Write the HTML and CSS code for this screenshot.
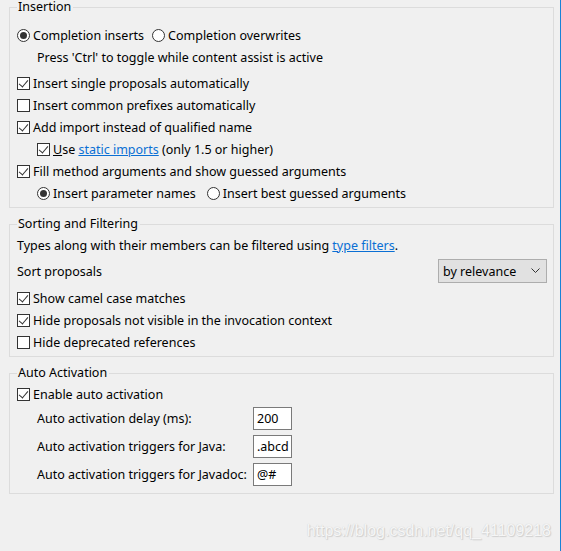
FILE: index.html
```html
<!DOCTYPE html>
<html lang="en">
<head>
    <meta charset="UTF-8">
    <title>Content Assist</title>
    <link rel="stylesheet" href="styles.css">
</head>
<body>
    <div class="page">
        <!-- Insertion -->
        <fieldset class="group group-insertion">
            <legend>Insertion</legend>
            <div class="row">
                <span class="opt"><span class="radio on"></span>Completion inserts</span>
                <span class="opt opt-gap"><span class="radio"></span>Completion overwrites</span>
            </div>
            <div class="row indent-text">Press 'Ctrl' to toggle while content assist is active</div>
            <div class="row row-sep"><span class="check on"></span>Insert single proposals automatically</div>
            <div class="row"><span class="check"></span>Insert common prefixes automatically</div>
            <div class="row"><span class="check on"></span>Add import instead of qualified name</div>
            <div class="row indent"><span class="check on"></span><u>U</u>se&nbsp;<a href="#">static imports</a>&nbsp;(only 1.5 or higher)</div>
            <div class="row"><span class="check on"></span>Fill method arguments and show guessed arguments</div>
            <div class="row indent">
                <span class="opt"><span class="radio on"></span>Insert parameter names</span>
                <span class="opt opt-gap2"><span class="radio"></span>Insert best guessed arguments</span>
            </div>
        </fieldset>

        <!-- Sorting and Filtering -->
        <fieldset class="group group-sorting">
            <legend>Sorting and Filtering</legend>
            <div class="row plain">Types along with their members can be filtered using&nbsp;<a href="#">type filters</a>.</div>
            <div class="row row-sort">
                <span class="plain">Sort proposals</span>
                <span class="combo">by relevance
                    <svg class="chev" width="9" height="6" viewBox="0 0 9 6"><polyline points="0.5,0.5 4.5,4.5 8.5,0.5" fill="none" stroke="#333" stroke-width="1"/></svg>
                </span>
            </div>
            <div class="row"><span class="check on"></span>Show camel case matches</div>
            <div class="row"><span class="check on"></span>Hide proposals not visible in the invocation context</div>
            <div class="row"><span class="check"></span>Hide deprecated references</div>
        </fieldset>

        <!-- Auto Activation -->
        <fieldset class="group group-auto">
            <legend>Auto Activation</legend>
            <div class="row"><span class="check on"></span>Enable auto activation</div>
            <div class="field-grid">
                <span class="field-label">Auto activation delay (ms):</span>
                <span class="field">200</span>
                <span class="field-label">Auto activation triggers for Java:</span>
                <span class="field">.abcd</span>
                <span class="field-label">Auto activation triggers for Javadoc:</span>
                <span class="field">@#</span>
            </div>
        </fieldset>

        <div class="watermark">https://blog.csdn.net/qq_41109218</div>
    </div>
</body>
</html>
```

FILE: styles.css
```css
* {
    margin: 0;
    padding: 0;
    box-sizing: border-box;
}

body {
    background-color: #f0f0f0;
    color: #000;
    font-family: 'Noto Sans', sans-serif;
    font-size: 12.5px;
}

.page {
    position: relative;
    width: 561px;
    height: 551px;
    padding: 1px 6px 0 9px;
    border-right: 1px solid #1883d7;
}

/* Group boxes */
.group {
    border: 1px solid #dcdcdc;
    padding: 0 8px 0 7px;
}

.group legend {
    margin-left: 0;
    padding: 0 2px 0 1px;
    line-height: 12px;
}

.group-insertion {
    padding-top: 11px;
    padding-bottom: 3px;
}

.group-sorting {
    margin-top: 10px;
    padding-top: 4px;
    padding-bottom: 3px;
}

.group-auto {
    margin-top: 10px;
    padding-top: 4px;
    padding-bottom: 5px;
}

.row {
    display: flex;
    align-items: center;
    height: 22px;
    white-space: nowrap;
}

.row-sep {
    margin-top: 4px;
}

.indent {
    padding-left: 20px;
}

.indent-text {
    padding-left: 20px;
}

.opt {
    display: flex;
    align-items: center;
}

.opt-gap {
    margin-left: 8px;
}

.opt-gap2 {
    margin-left: 11px;
}

a {
    color: #0a6fd4;
    text-decoration: underline;
}

/* Checkboxes and radios */
.check {
    display: inline-block;
    width: 13px;
    height: 13px;
    border: 1px solid #333;
    background: #fff;
    margin-right: 3px;
    position: relative;
    flex-shrink: 0;
}

.check.on::after {
    content: "";
    position: absolute;
    left: 3px;
    top: 0px;
    width: 4px;
    height: 8px;
    border-right: 1px solid #333;
    border-bottom: 1px solid #333;
    transform: rotate(40deg);
}

.radio {
    display: inline-block;
    width: 13px;
    height: 13px;
    border: 1px solid #333;
    border-radius: 50%;
    background: #fff;
    margin-right: 3px;
    position: relative;
    flex-shrink: 0;
}

.radio.on::after {
    content: "";
    position: absolute;
    left: 2px;
    top: 2px;
    width: 7px;
    height: 7px;
    border-radius: 50%;
    background: #333;
}

/* Sort row */
.row-sort {
    height: 24px;
    margin: 3px 0 4px;
    justify-content: space-between;
}

.combo {
    display: flex;
    align-items: center;
    justify-content: space-between;
    width: 109px;
    height: 24px;
    margin-right: -2px;
    padding: 0 6px 0 4px;
    background: #e1e1e1;
    border: 1px solid #adadad;
}

/* Auto activation fields */
.field-grid {
    display: grid;
    grid-template-columns: 216px 39px;
    grid-auto-rows: 28px;
    align-items: center;
    padding-left: 20px;
    margin-top: -1px;
}

.field {
    height: 23px;
    line-height: 21px;
    border: 1px solid #7a7a7a;
    background: #fff;
    padding-left: 3px;
    overflow: hidden;
    white-space: nowrap;
}

.watermark {
    position: absolute;
    right: 9px;
    top: 522px;
    font-family: 'Liberation Sans', Arial, sans-serif;
    font-size: 16px;
    color: #f6f6f6;
    text-shadow: 0 0 1px #c8c8c8, 1px 1px 1px #d0d0d0;
}
```
